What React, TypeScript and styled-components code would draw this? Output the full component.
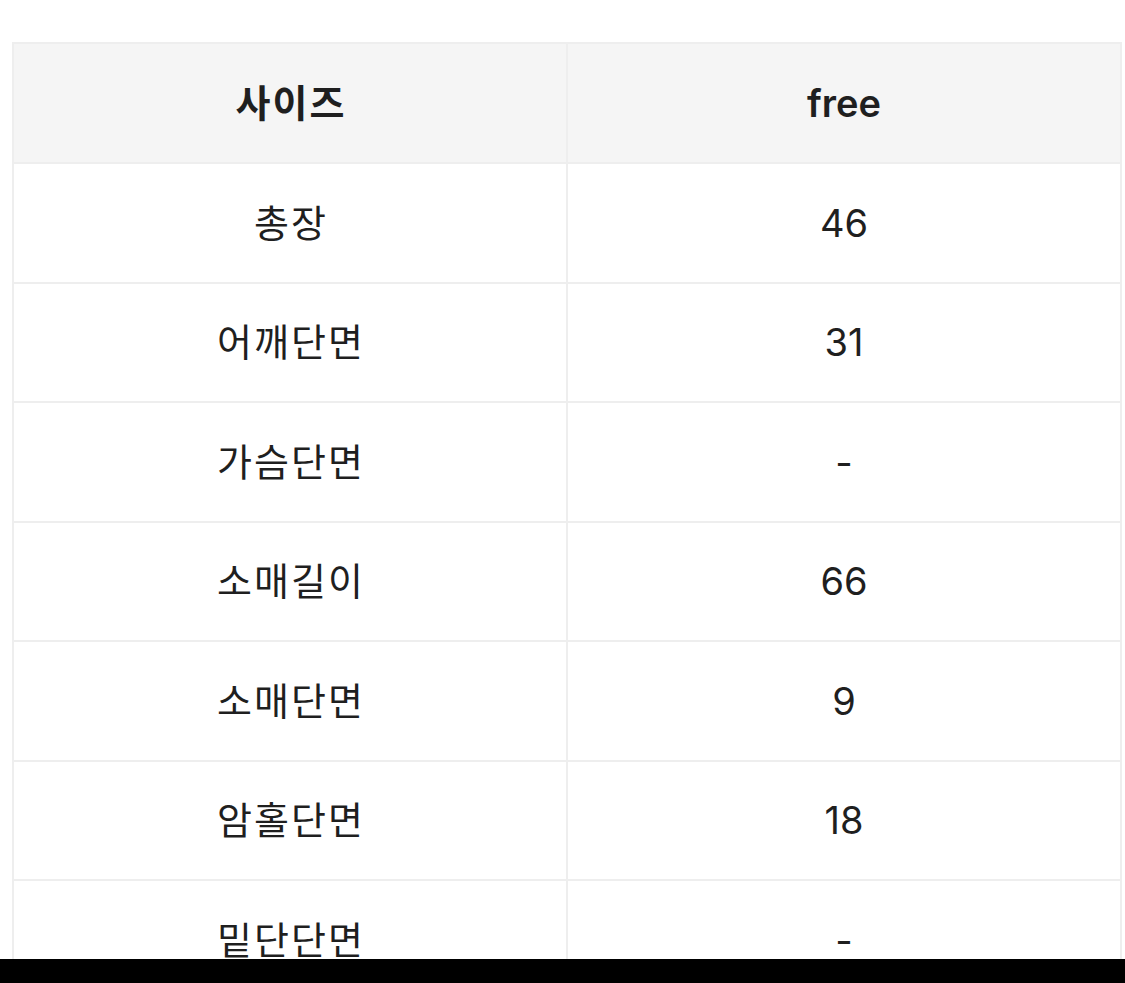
import * as React from 'react';
import styled, { createGlobalStyle } from 'styled-components';

const GlobalStyle = createGlobalStyle`
  html, body {
    margin: 0;
    padding: 0;
    background: #ffffff;
  }
  body {
    font-family: Inter, "Noto Sans CJK KR", "Noto Sans", sans-serif;
    color: #222222;
  }
`;

const Screen = styled.div`
  width: 1125px;
  height: 983px;
  display: flex;
  flex-direction: column;
  overflow: hidden;
`;

const Viewport = styled.div`
  height: 959px;
  overflow: hidden;
  padding: 42px 3px 0 12px;
  box-sizing: border-box;
`;

const BottomBar = styled.div`
  height: 24px;
  background: #000000;
  flex-shrink: 0;
`;

const SizeTable = styled.table`
  width: 1110px;
  border-collapse: collapse;
  table-layout: fixed;
`;

const Cell = styled.td<{ $head?: boolean; $label?: boolean }>`
  height: ${p => (p.$head ? '118px' : '117.5px')};
  border: 2px solid #eeeeee;
  text-align: center;
  vertical-align: middle;
  font-size: 38px;
  line-height: 1;
  font-weight: ${p => (p.$head ? 600 : 400)};
  letter-spacing: ${p => (p.$label ? '2px' : '0')};
  text-indent: ${p => (p.$label ? '2px' : '0')};
  background: ${p => (p.$head ? '#f5f5f5' : '#ffffff')};
  color: #1f1f1f;
  padding: 0;
`;

const rows: [string, string][] = [
  ['총장', '46'],
  ['어깨단면', '31'],
  ['가슴단면', '-'],
  ['소매길이', '66'],
  ['소매단면', '9'],
  ['암홀단면', '18'],
  ['밑단단면', '-'],
];

const App: React.FC = () => {
  return (
    <>
      <GlobalStyle />
      <Screen>
        <Viewport>
          <SizeTable>
            <colgroup>
              <col style={{ width: 554 }} />
              <col />
            </colgroup>
            <thead>
              <tr>
                <Cell as="th" $head={true} $label={true}>사이즈</Cell>
                <Cell as="th" $head={true}>free</Cell>
              </tr>
            </thead>
            <tbody>
              {rows.map(([label, value]) => (
                <tr key={label}>
                  <Cell $label={true}>{label}</Cell>
                  <Cell>{value}</Cell>
                </tr>
              ))}
            </tbody>
          </SizeTable>
        </Viewport>
        <BottomBar />
      </Screen>
    </>
  );
};

export default App;
